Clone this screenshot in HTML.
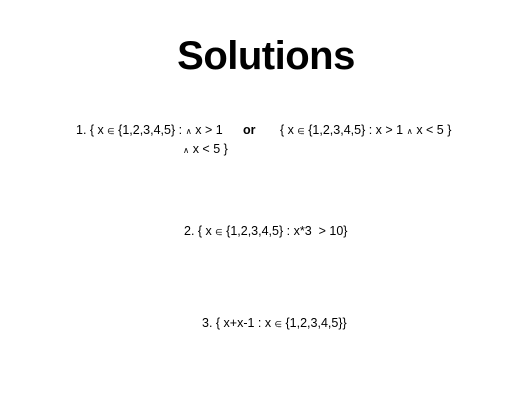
<!DOCTYPE html>
<html><head><style>
body{margin:0;width:532px;height:400px;background:#fff;position:relative;font-family:"Liberation Sans","DejaVu Sans",sans-serif;color:#000;overflow:hidden}
.t{position:absolute;white-space:nowrap;font-size:12.5px;line-height:14px}
.s{font-size:8.5px}
</style></head><body>
<div class="t" style="left:0;width:532px;text-align:center;top:33px;font-size:40px;line-height:46px;font-weight:bold;letter-spacing:-0.5px">Solutions</div>
<div class="t" style="left:76px;top:123px">1. { x <span class="s">∈</span> {1,2,3,4,5} : <span class="s">∧</span> x &gt; 1</div>
<div class="t" style="left:183px;top:142px"><span class="s">∧</span> x &lt; 5 }</div>
<div class="t" style="left:243px;top:123px;font-weight:bold">or</div>
<div class="t" style="left:280px;top:123px">{ x <span class="s">∈</span> {1,2,3,4,5} : x &gt; 1 <span class="s">∧</span> x &lt; 5 }</div>
<div class="t" style="left:184px;top:224px">2. { x <span class="s">∈</span> {1,2,3,4,5} : x*3 &nbsp;&gt; 10}</div>
<div class="t" style="left:202px;top:316px">3. { x+x-1 : x <span class="s">∈</span> {1,2,3,4,5}}</div>
</body></html>
